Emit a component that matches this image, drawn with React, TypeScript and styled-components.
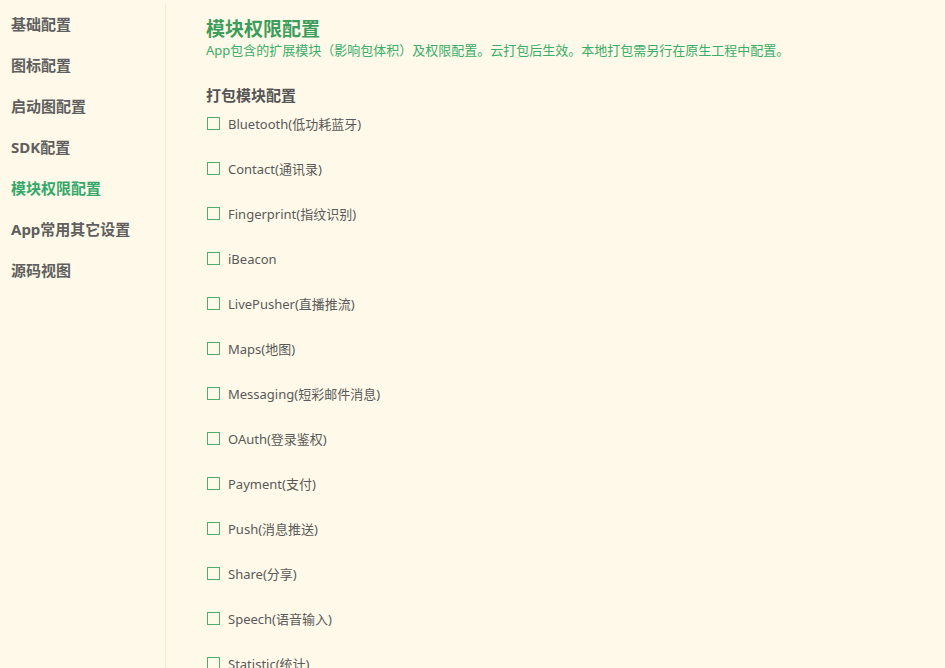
import React from "react";
import styled, { createGlobalStyle } from "styled-components";

const Global = createGlobalStyle`
  html, body { margin: 0; padding: 0; background: #fef9e8; }
  body { font-family: "Noto Sans", "Noto Sans CJK SC", sans-serif; overflow: hidden; }
`;

const Page = styled.div`
  display: flex;
  height: 668px;
  background: #fef9e8;
`;

const Sidebar = styled.nav`
  width: 165px;
  margin-top: 4px;
  border-right: 1px solid #f3ead2;
  display: flex;
  flex-direction: column;
  flex-shrink: 0;
`;

const NavItem = styled.div<{ $active?: boolean }>`
  height: 41px;
  line-height: 41px;
  padding-left: 11px;
  font-size: 15px;
  font-weight: 700;
  color: ${(p) => (p.$active ? "#34a86a" : "#5f5f5f")};
`;

const Main = styled.main`
  flex: 1;
  padding: 17px 0 0 40px;
`;

const Title = styled.h1`
  margin: 0;
  font-size: 19px;
  line-height: 24px;
  font-weight: 700;
  color: #3d9d5c;
`;

const Subtitle = styled.p`
  margin: 0;
  font-size: 13px;
  line-height: 18px;
  color: #3aad68;
`;

const Section = styled.h2`
  margin: 26px 0 0 0;
  font-size: 15px;
  line-height: 20px;
  font-weight: 700;
  color: #555;
`;

const List = styled.div`
  display: flex;
  flex-direction: column;
  margin-top: 10px;
`;

const Row = styled.label`
  display: flex;
  align-items: flex-start;
  height: 45px;
  font-size: 13px;
  color: #5a5a5a;
  line-height: 18px;
`;

const Box = styled.span`
  display: block;
  width: 11px;
  height: 11px;
  border: 1px solid #4fae6a;
  margin: 2px 8px 0 1px;
  flex-shrink: 0;
`;

const nav = ["基础配置", "图标配置", "启动图配置", "SDK配置", "模块权限配置", "App常用其它设置", "源码视图"];
const modules = [
  "Bluetooth(低功耗蓝牙)",
  "Contact(通讯录)",
  "Fingerprint(指纹识别)",
  "iBeacon",
  "LivePusher(直播推流)",
  "Maps(地图)",
  "Messaging(短彩邮件消息)",
  "OAuth(登录鉴权)",
  "Payment(支付)",
  "Push(消息推送)",
  "Share(分享)",
  "Speech(语音输入)",
  "Statistic(统计)",
];

export default function App() {
  return (
    <>
      <Global />
      <Page>
        <Sidebar>
          {nav.map((n) => (
            <NavItem key={n} $active={n === "模块权限配置"}>
              {n}
            </NavItem>
          ))}
        </Sidebar>
        <Main>
          <Title>模块权限配置</Title>
          <Subtitle>App包含的扩展模块（影响包体积）及权限配置。云打包后生效。本地打包需另行在原生工程中配置。</Subtitle>
          <Section>打包模块配置</Section>
          <List>
            {modules.map((m) => (
              <Row key={m}>
                <Box />
                {m}
              </Row>
            ))}
          </List>
        </Main>
      </Page>
    </>
  );
}
